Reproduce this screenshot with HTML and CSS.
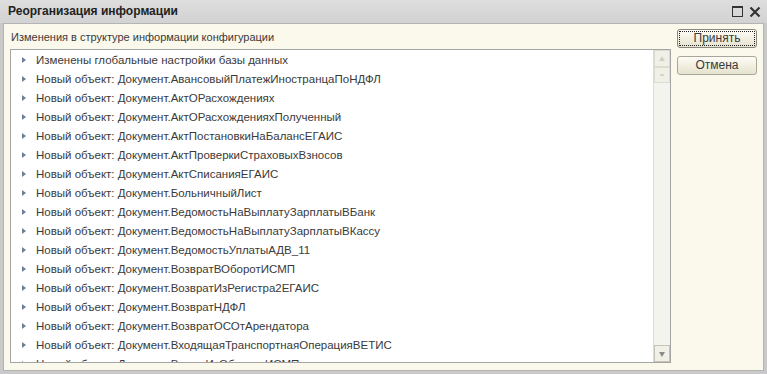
FILE: index.html
```html
<!DOCTYPE html>
<html lang="ru">
<head>
    <meta charset="UTF-8">
    <title>Реорганизация информации</title>
    <link rel="stylesheet" href="styles.css">
</head>
<body>
    <div class="window">
        <div class="titlebar">
            <span class="title">Реорганизация информации</span>
            <div class="title-buttons">
                <span class="btn-max"></span>
                <svg class="btn-close" width="12" height="12" viewBox="0 0 12 12">
                    <path d="M1.5 1.5 L10.5 10.5 M10.5 1.5 L1.5 10.5" stroke="#333" stroke-width="2.2"/>
                </svg>
            </div>
        </div>
        <div class="body">
            <div class="main">
                <div class="caption">Изменения в структуре информации конфигурации</div>
                <div class="listbox">
                    <ul class="rows">
                        <li>Изменены глобальные настройки базы данных</li>
                        <li>Новый объект: Документ.АвансовыйПлатежИностранцаПоНДФЛ</li>
                        <li>Новый объект: Документ.АктОРасхождениях</li>
                        <li>Новый объект: Документ.АктОРасхожденияхПолученный</li>
                        <li>Новый объект: Документ.АктПостановкиНаБалансЕГАИС</li>
                        <li>Новый объект: Документ.АктПроверкиСтраховыхВзносов</li>
                        <li>Новый объект: Документ.АктСписанияЕГАИС</li>
                        <li>Новый объект: Документ.БольничныйЛист</li>
                        <li>Новый объект: Документ.ВедомостьНаВыплатуЗарплатыВБанк</li>
                        <li>Новый объект: Документ.ВедомостьНаВыплатуЗарплатыВКассу</li>
                        <li>Новый объект: Документ.ВедомостьУплатыАДВ_11</li>
                        <li>Новый объект: Документ.ВозвратВОборотИСМП</li>
                        <li>Новый объект: Документ.ВозвратИзРегистра2ЕГАИС</li>
                        <li>Новый объект: Документ.ВозвратНДФЛ</li>
                        <li>Новый объект: Документ.ВозвратОСОтАрендатора</li>
                        <li>Новый объект: Документ.ВходящаяТранспортнаяОперацияВЕТИС</li>
                        <li>Новый объект: Документ.ВыводИзОборотаИСМП</li>
                    </ul>
                    <div class="scrollbar">
                        <div class="arrow up"></div>
                        <div class="thumb"></div>
                        <div class="track"></div>
                        <div class="arrow down"></div>
                    </div>
                </div>
            </div>
            <div class="side">
                <a href="#" class="button default">Принять</a>
                <a href="#" class="button">Отмена</a>
            </div>
        </div>
    </div>
</body>
</html>
```

FILE: styles.css
```css
* {
    margin: 0;
    padding: 0;
    box-sizing: border-box;
}

body {
    font-family: 'Liberation Sans', Arial, sans-serif;
    font-size: 12px;
    color: #333;
    background: #c8c8c8;
    width: 767px;
    height: 374px;
    overflow: hidden;
}

.window {
    width: 767px;
    height: 374px;
    display: flex;
    flex-direction: column;
    background: #c9c9c9;
    padding: 0 3px 3px 3px;
}

.titlebar {
    height: 23px;
    flex-shrink: 0;
    display: flex;
    align-items: center;
    justify-content: space-between;
    padding: 0 6px 2px 8px;
    margin: 0 -3px;
    background: linear-gradient(180deg, #dedede 0%, #d2d2d2 100%);
}

.title {
    font-weight: bold;
    font-size: 12px;
    color: #222;
}

.title-buttons {
    display: flex;
    align-items: center;
    gap: 6px;
    padding-top: 2px;
}

.btn-max {
    width: 11px;
    height: 11px;
    border: 1.5px solid #333;
    border-top-width: 2px;
}

.body {
    flex: 1;
    min-height: 0;
    display: flex;
    background: #fbf8ec;
    border: 1px solid #b4b4b4;
    padding: 5px 6px 7px 6px;
    gap: 6px;
}

.main {
    flex: 1;
    min-height: 0;
    display: flex;
    flex-direction: column;
}

.caption {
    height: 20px;
    padding-left: 1px;
    line-height: 16px;
    font-size: 11px;
    color: #3a3a3a;
}

.listbox {
    flex: 1;
    min-height: 0;
    display: flex;
    background: #fff;
    border: 1px solid #a5a5a5;
    overflow: hidden;
}

.rows {
    flex: 1;
    list-style: none;
    padding-top: 1px;
    overflow: hidden;
}

.rows li {
    height: 19px;
    line-height: 19px;
    padding-left: 25px;
    position: relative;
    font-size: 11.5px;
    color: #3a3a3a;
    white-space: nowrap;
}

.rows li::before {
    content: '';
    position: absolute;
    left: 11px;
    top: 6px;
    border-left: 4px solid #6b7f95;
    border-top: 3.5px solid transparent;
    border-bottom: 3.5px solid transparent;
}

.scrollbar {
    width: 17px;
    flex-shrink: 0;
    display: flex;
    flex-direction: column;
    border-left: 1px solid #dcdcd2;
    background: #f4f4ee;
}

.arrow {
    height: 17px;
    position: relative;
    background: #f1f0e6;
    border: 1px solid #dedbd0;
}

.arrow::after {
    content: '';
    position: absolute;
    left: 4px;
    border-left: 3.5px solid transparent;
    border-right: 3.5px solid transparent;
}

.arrow.up::after {
    top: 5px;
    border-bottom: 5px solid #d0d0c6;
}

.arrow.down {
    border-color: #c7c4b6;
}

.arrow.down::after {
    top: 6px;
    border-top: 5px solid #8a8a8a;
}

.thumb {
    height: 16px;
    background: #f1f0e6;
    border: 1px solid #dedbd0;
    position: relative;
}

.thumb::after {
    content: '';
    position: absolute;
    left: 5px;
    top: 6px;
    width: 4px;
    height: 2px;
    background: #d6d4c8;
}

.track {
    flex: 1;
}

.side {
    width: 80px;
    display: flex;
    flex-direction: column;
    gap: 8px;
}

.button {
    display: block;
    height: 19px;
    line-height: 17px;
    text-align: center;
    text-decoration: none;
    color: #3a3a3a;
    font-size: 12px;
    border: 1px solid #a9a69a;
    border-radius: 3px;
    background: linear-gradient(180deg, #fdfcf6 0%, #f1eedf 55%, #e6e2cf 100%);
}

.button.default {
    outline: 1px dotted #222;
    outline-offset: -3px;
    border-color: #8a877c;
}
```
